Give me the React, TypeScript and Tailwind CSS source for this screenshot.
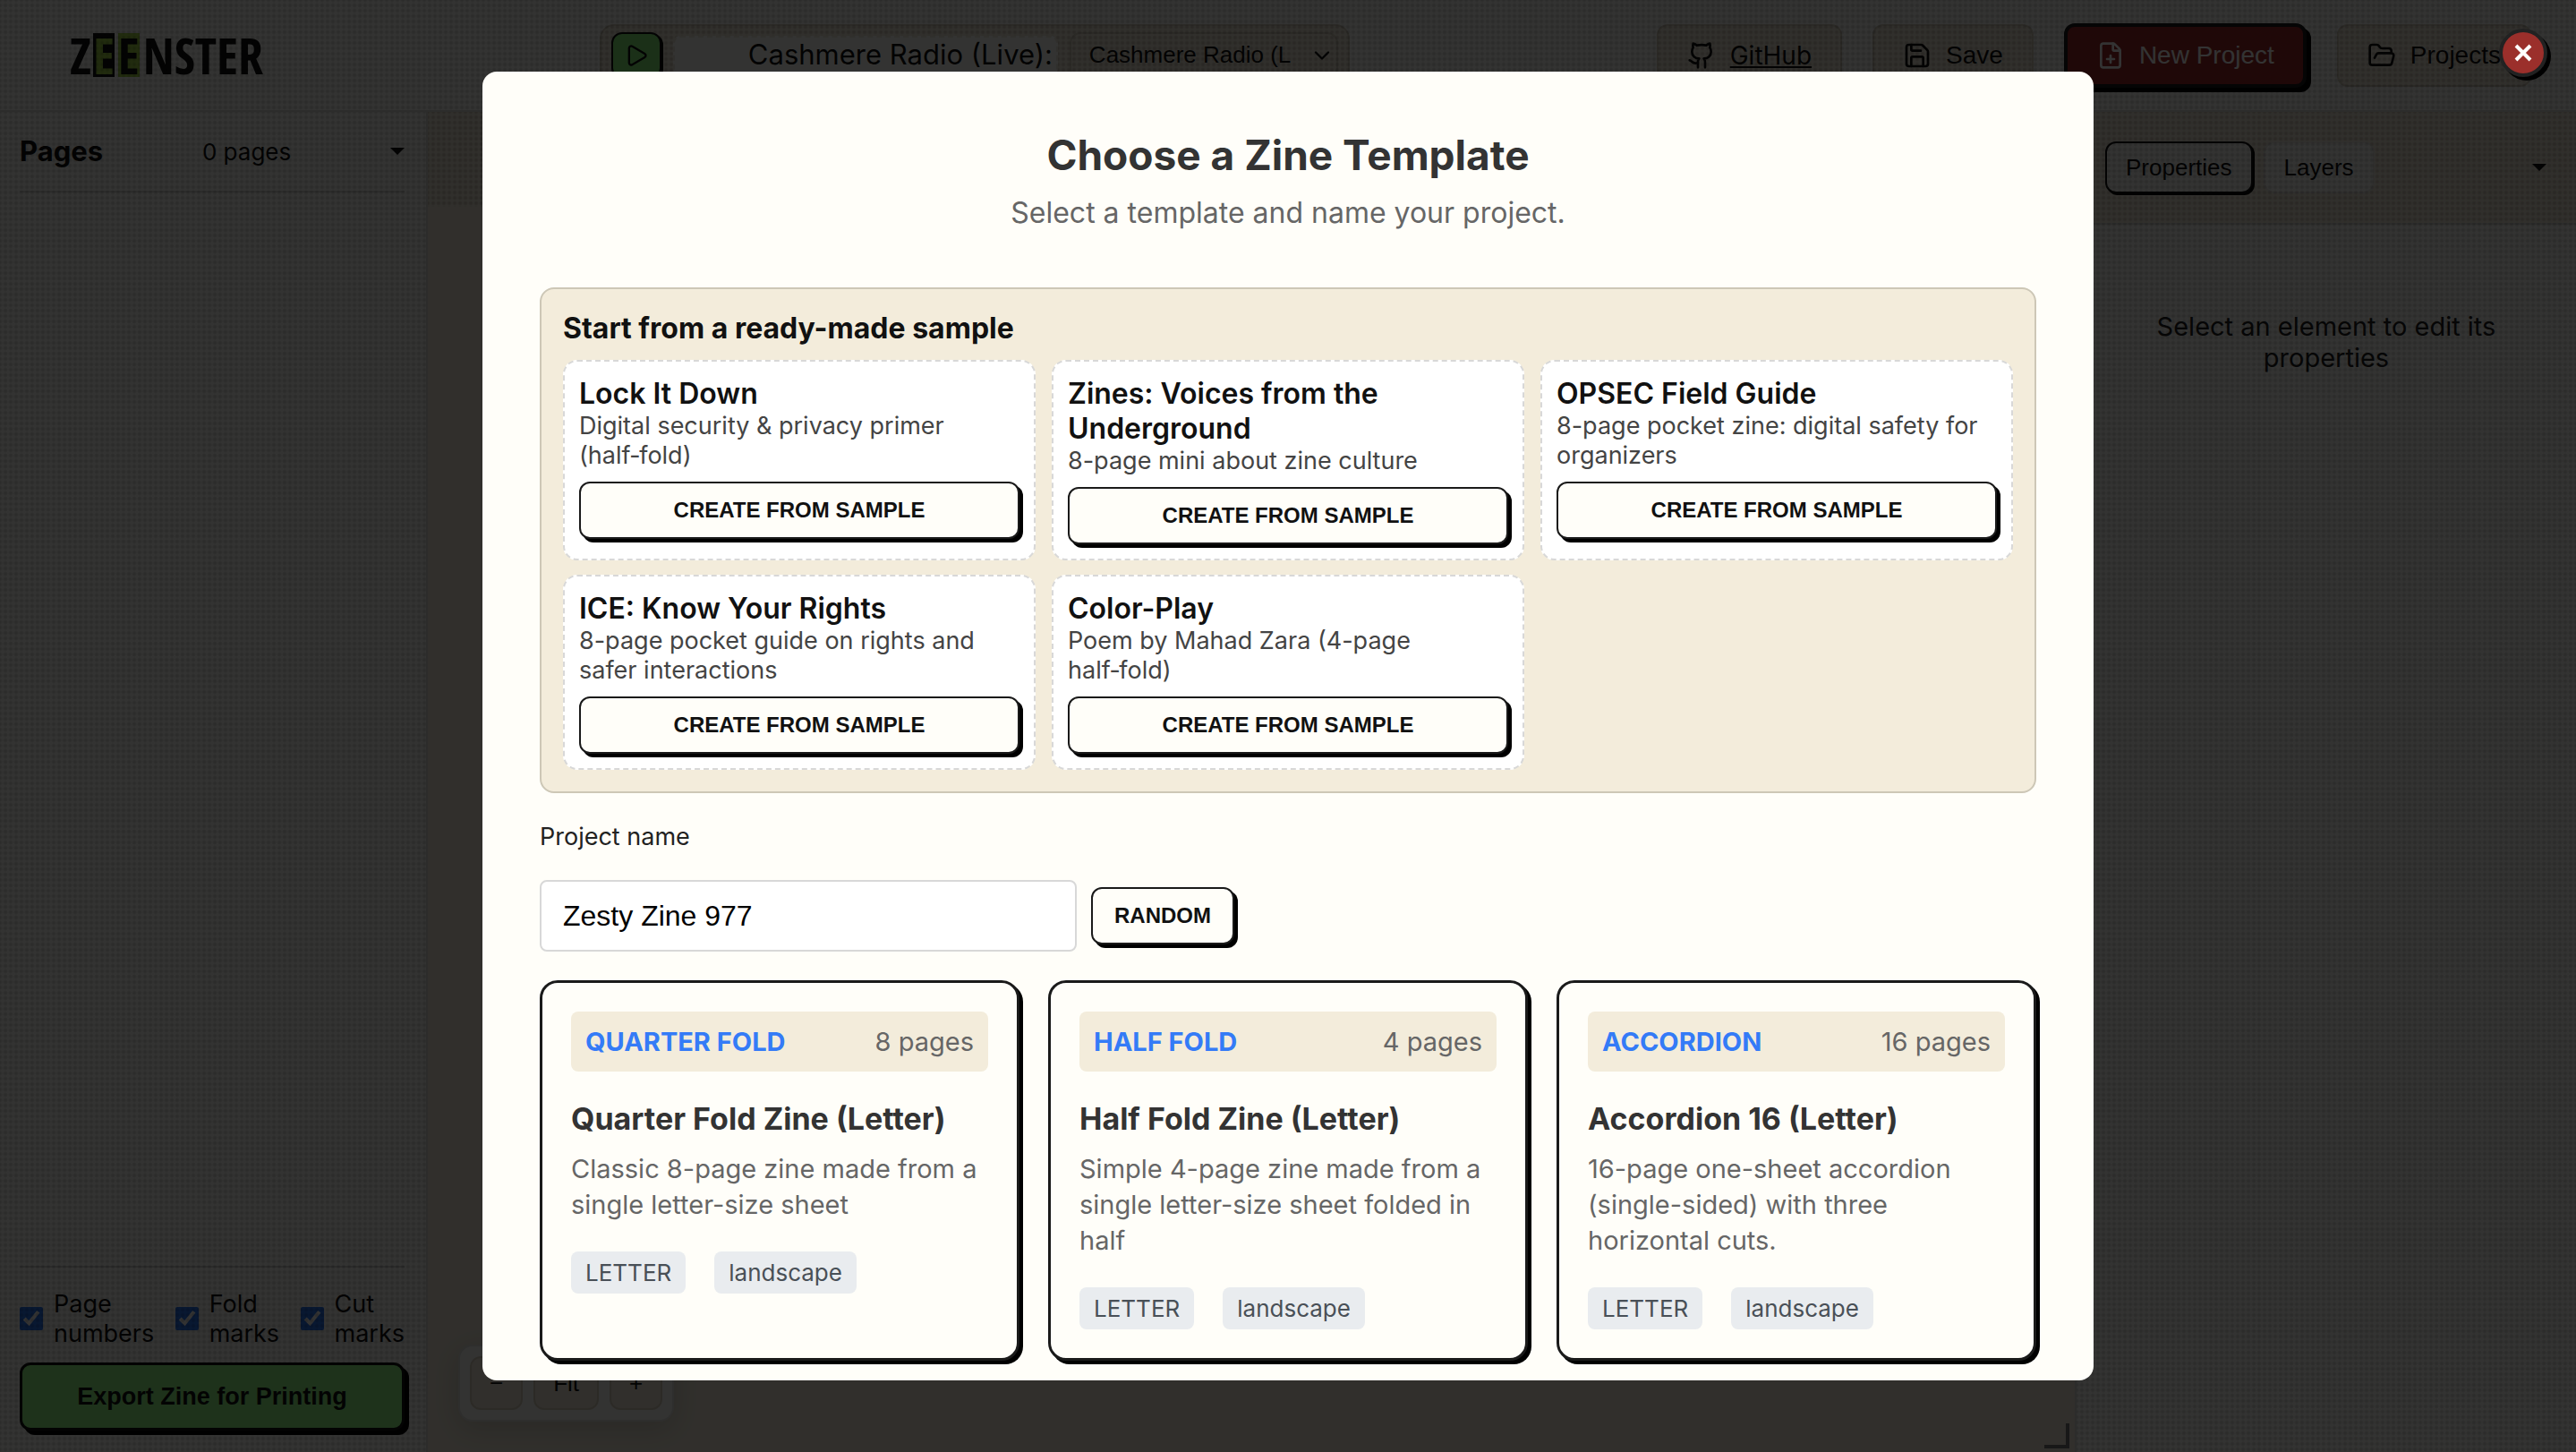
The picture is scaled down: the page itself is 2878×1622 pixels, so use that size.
import React from "react";
import { ChevronDown, FilePlus, FolderOpen, Github, Play, Save } from "lucide-react";

const samples = [
  { title: "Lock It Down", text: "Digital security & privacy primer (half‑fold)" },
  { title: "Zines: Voices from the Underground", text: "8-page mini about zine culture" },
  { title: "OPSEC Field Guide", text: "8-page pocket zine: digital safety for organizers" },
  { title: "ICE: Know Your Rights", text: "8-page pocket guide on rights and safer interactions" },
  { title: "Color-Play", text: "Poem by Mahad Zara (4-page half‑fold)" },
];

const templates = [
  {
    kind: "QUARTER FOLD",
    pages: "8 pages",
    title: "Quarter Fold Zine (Letter)",
    text: "Classic 8-page zine made from a single letter-size sheet",
  },
  {
    kind: "HALF FOLD",
    pages: "4 pages",
    title: "Half Fold Zine (Letter)",
    text: "Simple 4-page zine made from a single letter-size sheet folded in half",
  },
  {
    kind: "ACCORDION",
    pages: "16 pages",
    title: "Accordion 16 (Letter)",
    text: "16-page one-sheet accordion (single-sided) with three horizontal cuts.",
  },
];

const arial = "font-['Liberation_Sans',Arial,sans-serif]";

// Halftone dots printed over the surface of a panel.
function Dots() {
  return (
    <div className="pointer-events-none absolute inset-0 bg-[radial-gradient(circle,rgba(0,0,0,0.15)_0,rgba(0,0,0,0.15)_1px,transparent_3px)] [background-size:6px_6px] [background-position:-3px_-3px]" />
  );
}

function Caret() {
  return (
    <svg viewBox="0 0 16 8" className="h-2 w-4" aria-hidden="true">
      <path d="M0 0h16L8 8z" fill="#111" />
    </svg>
  );
}

function Logo() {
  return (
    <div className="flex w-[249px] items-center font-['Liberation_Sans_Narrow','Open_Sans_Condensed','Roboto_Condensed','Liberation_Sans',sans-serif] text-[56px] leading-[49px] font-bold text-[#111]">
      <span>Z</span>
      <span className="ml-0.5 bg-[#111] text-[#a5d84a]">E</span>
      <span className="mx-1 bg-[#a5d84a]">E</span>
      <span>NSTER</span>
    </div>
  );
}

function SmallButton({ children }: { children: React.ReactNode }) {
  return (
    <button
      className={`${arial} h-16 rounded-xl border-2 border-[#1a1a1a] bg-[#fffef9] px-6 text-[24px] font-bold text-[#111] uppercase shadow-[4px_4px_0_#000]`}
    >
      {children}
    </button>
  );
}

function TopBar() {
  const plain = `flex h-[70px] items-center gap-4 rounded-xl border-2 border-[#d9d1bf] bg-[#f3ecdb] px-8 text-[28px] text-[#111]`;
  return (
    <header className="relative flex h-[125px] shrink-0 items-center justify-between border-b-2 border-[#dcdcd8] bg-[#fffffa] pr-[50px] pl-[78px]">
      <Logo />
      <div className="flex h-[70px] items-center gap-[13px] rounded-2xl border-2 border-[#d9d1bf] bg-[#f3ecdb] px-[11px]">
        <button
          aria-label="Play"
          className="relative z-10 flex h-[52px] w-[56px] items-center justify-center rounded-xl border-2 border-[#111] bg-[#86f07a] shadow-[2px_2px_0_#000]"
        >
          <Play className="size-7 text-[#111]" />
        </button>
        <div className="relative z-10 flex h-11 w-[430px] items-center overflow-hidden rounded-lg border-2 border-dashed border-[#eee8da] bg-[#fffffa] pl-[82px] text-[31px] whitespace-nowrap text-[#111]">
          Cashmere Radio (Live):
        </div>
        <div className="relative">
          <select
            aria-label="Station"
            className={`${arial} h-[52px] w-[300px] appearance-none rounded-xl border-2 border-[#d9d1bf] bg-[#f3ecdb] pr-12 pl-5 text-[26px] text-[#111]`}
          >
            <option>Cashmere Radio (L</option>
          </select>
          <ChevronDown className="pointer-events-none absolute top-3 right-1 size-7 text-[#111]" />
        </div>
      </div>
      <nav className="flex items-center gap-[34px]">
        <a href="#github" className={plain}>
          <Github className="size-8" />
          <span className="underline">GitHub</span>
        </a>
        <button className={`${plain} ${arial}`}>
          <Save className="size-8" />
          Save
        </button>
        <button
          className={`${arial} relative z-10 flex h-[72px] items-center gap-4 rounded-xl border-4 border-[#1a1a1a] bg-[#9b2c2c] px-8 text-[28px] text-white shadow-[5px_5px_0_#000]`}
        >
          <FilePlus className="size-8" />
          New Project
        </button>
        <button className={`${plain} ${arial}`}>
          <FolderOpen className="size-8" />
          Projects
        </button>
      </nav>
      <Dots />
    </header>
  );
}

function PagesPanel() {
  return (
    <aside className="relative flex w-[478px] shrink-0 flex-col border-r-2 border-[#dcdcd8] bg-[#fffffa] pr-6 pb-6 pl-[22px] text-[#111]">
      <div className="flex h-[90px] items-center justify-between border-b-2 border-[#dcdcd8]">
        <h2 className="text-[31px] font-bold">Pages</h2>
        <span className="text-[26px]">0 pages</span>
        <button aria-label="Collapse pages">
          <Caret />
        </button>
      </div>
      <div className="mt-auto border-t-2 border-[#dcdcd8] pt-6">
        <div className="flex justify-between text-[27px] leading-[33px]">
          {["Page numbers", "Fold marks", "Cut marks"].map((name) => (
            <label key={name} className="flex items-center gap-3">
              <input type="checkbox" defaultChecked className="size-[26px] shrink-0 accent-[#2b78f5]" />
              <span className="w-min">{name}</span>
            </label>
          ))}
        </div>
        <button
          className={`${arial} relative z-10 mt-4 h-[76px] w-full rounded-xl border-[3px] border-[#111] bg-[#96fa87] text-[27px] font-bold shadow-[5px_5px_0_#000]`}
        >
          Export Zine for Printing
        </button>
      </div>
      <Dots />
    </aside>
  );
}

function Canvas() {
  const key = "h-[60px] rounded-xl border-2 border-[#d9d1bf] bg-[#f3ecdb] px-5";
  return (
    <main className="relative flex min-w-0 flex-1 flex-col bg-[#f3ecdb]">
      <div className="relative h-[106px]">
        <Dots />
      </div>
      <div
        className={`${arial} absolute bottom-[34px] left-[34px] flex gap-3 rounded-2xl border-2 border-[#e6e6e2] bg-[#fffffa] p-[11px] text-[26px] text-[#111] shadow-[0_8px_32px_rgba(0,0,0,0.15)]`}
      >
        <button className={key}>−</button>
        <button className={key}>Fit</button>
        <button className={key}>+</button>
      </div>
      <div className="absolute right-[6px] bottom-1 size-7 border-r-4 border-b-4 border-[#777]" />
    </main>
  );
}

function PropertiesPanel() {
  return (
    <aside className="relative w-[560px] shrink-0 border-l-2 border-[#dcdcd8] bg-[#fffffa] text-[#111]">
      <div className="flex h-[126px] items-center border-b-2 border-[#dcdcd8] bg-[#f3ecdb] pr-[33px] pl-8">
        <div className={`${arial} flex gap-3 text-[26px]`}>
          <button className="h-[58px] rounded-xl border-2 border-[#111] bg-[#fffffa] px-[21px] shadow-[2px_2px_0_#000]">
            Properties
          </button>
          <button className="h-[58px] rounded-xl border-2 border-[#eeece4] bg-[#fffffa] px-[21px]">Layers</button>
        </div>
        <button aria-label="Collapse properties" className="ml-auto">
          <Caret />
        </button>
      </div>
      <p className="mx-auto mt-24 max-w-[430px] text-center text-[29px] leading-[35px] text-[#222]">
        Select an element to edit its properties
      </p>
      <Dots />
    </aside>
  );
}

function TemplateDialog() {
  return (
    <div
      role="dialog"
      aria-labelledby="dialog-title"
      className="flex h-[calc(100vh-160px)] w-[1800px] max-w-[90vw] flex-col gap-8 overflow-y-auto rounded-2xl bg-[#fffef9] p-16 [scrollbar-width:none]"
    >
      <div className="mb-8 text-center">
        <h1 id="dialog-title" className="text-[46px] leading-[58px] font-bold text-[#333]">
          Choose a Zine Template
        </h1>
        <p className="mt-4 text-[32px] leading-[39px] text-[#666]">Select a template and name your project.</p>
      </div>

      <section className="rounded-2xl border-2 border-[#cdc7b6] bg-[#f3ecdb] p-6">
        <h2 className="text-[32px] leading-[39px] font-bold text-[#111]">Start from a ready-made sample</h2>
        <div className="mt-4 grid grid-cols-3 gap-x-[18px] gap-y-4">
          {samples.map((s) => (
            <article
              key={s.title}
              className="flex flex-col rounded-2xl border-2 border-dashed border-[#d8d8d8] bg-white p-4"
            >
              <h3 className="text-[32px] leading-[39px] font-semibold text-[#111]">{s.title}</h3>
              <p className="mb-[13px] text-[27px] leading-[33px] text-[#444]">{s.text}</p>
              <SmallButton>Create from sample</SmallButton>
            </article>
          ))}
        </div>
      </section>

      <label htmlFor="project-name" className="text-[27px] leading-[33px] text-[#222]">
        Project name
      </label>
      <div className="flex items-center gap-4">
        <input
          id="project-name"
          defaultValue="Zesty Zine 977"
          className={`${arial} h-20 w-[600px] rounded-lg border-2 border-[#d8d8d8] bg-white px-6 text-[32px] text-black`}
        />
        <SmallButton>Random</SmallButton>
      </div>

      <div className="grid grid-cols-3 gap-8">
        {templates.map((t) => (
          <article
            key={t.kind}
            className="rounded-[20px] border-[3px] border-[#1a1a1a] bg-[#fffef9] p-8 shadow-[4px_4px_0_#000]"
          >
            <div className="flex h-[67px] items-center justify-between rounded-lg bg-[#f3ecdb] px-4 text-[29px]">
              <span className="font-bold text-[#347bf7]">{t.kind}</span>
              <span className="text-[#666]">{t.pages}</span>
            </div>
            <h3 className="mt-8 text-[34px] leading-[41px] font-bold text-[#333]">{t.title}</h3>
            <p className="mt-4 text-[29px] leading-[40px] text-[#666]">{t.text}</p>
            <div className="mt-8 flex gap-8 text-[26px] leading-[31px] text-[#495057]">
              <span className="rounded-lg bg-[#e9ecef] px-4 py-2">LETTER</span>
              <span className="rounded-lg bg-[#e9ecef] px-4 py-2">landscape</span>
            </div>
          </article>
        ))}
      </div>
    </div>
  );
}

export default function App() {
  return (
    <div className="flex h-screen flex-col overflow-hidden font-['Inter',sans-serif]">
      <TopBar />
      <div className="flex min-h-0 flex-1">
        <PagesPanel />
        <Canvas />
        <PropertiesPanel />
      </div>
      <div className="fixed inset-0 z-20 flex items-center justify-center bg-black/80">
        <TemplateDialog />
        <button
          aria-label="Close"
          className="absolute top-8 right-8 flex size-[54px] items-center justify-center rounded-full border-4 border-[#222] bg-[#9b2f2b] shadow-[4px_4px_0_#000]"
        >
          <svg viewBox="0 0 20 20" className="size-5" aria-hidden="true">
            <path d="M2 2l16 16M18 2L2 18" stroke="#fff" strokeWidth="4" fill="none" />
          </svg>
        </button>
      </div>
    </div>
  );
}
